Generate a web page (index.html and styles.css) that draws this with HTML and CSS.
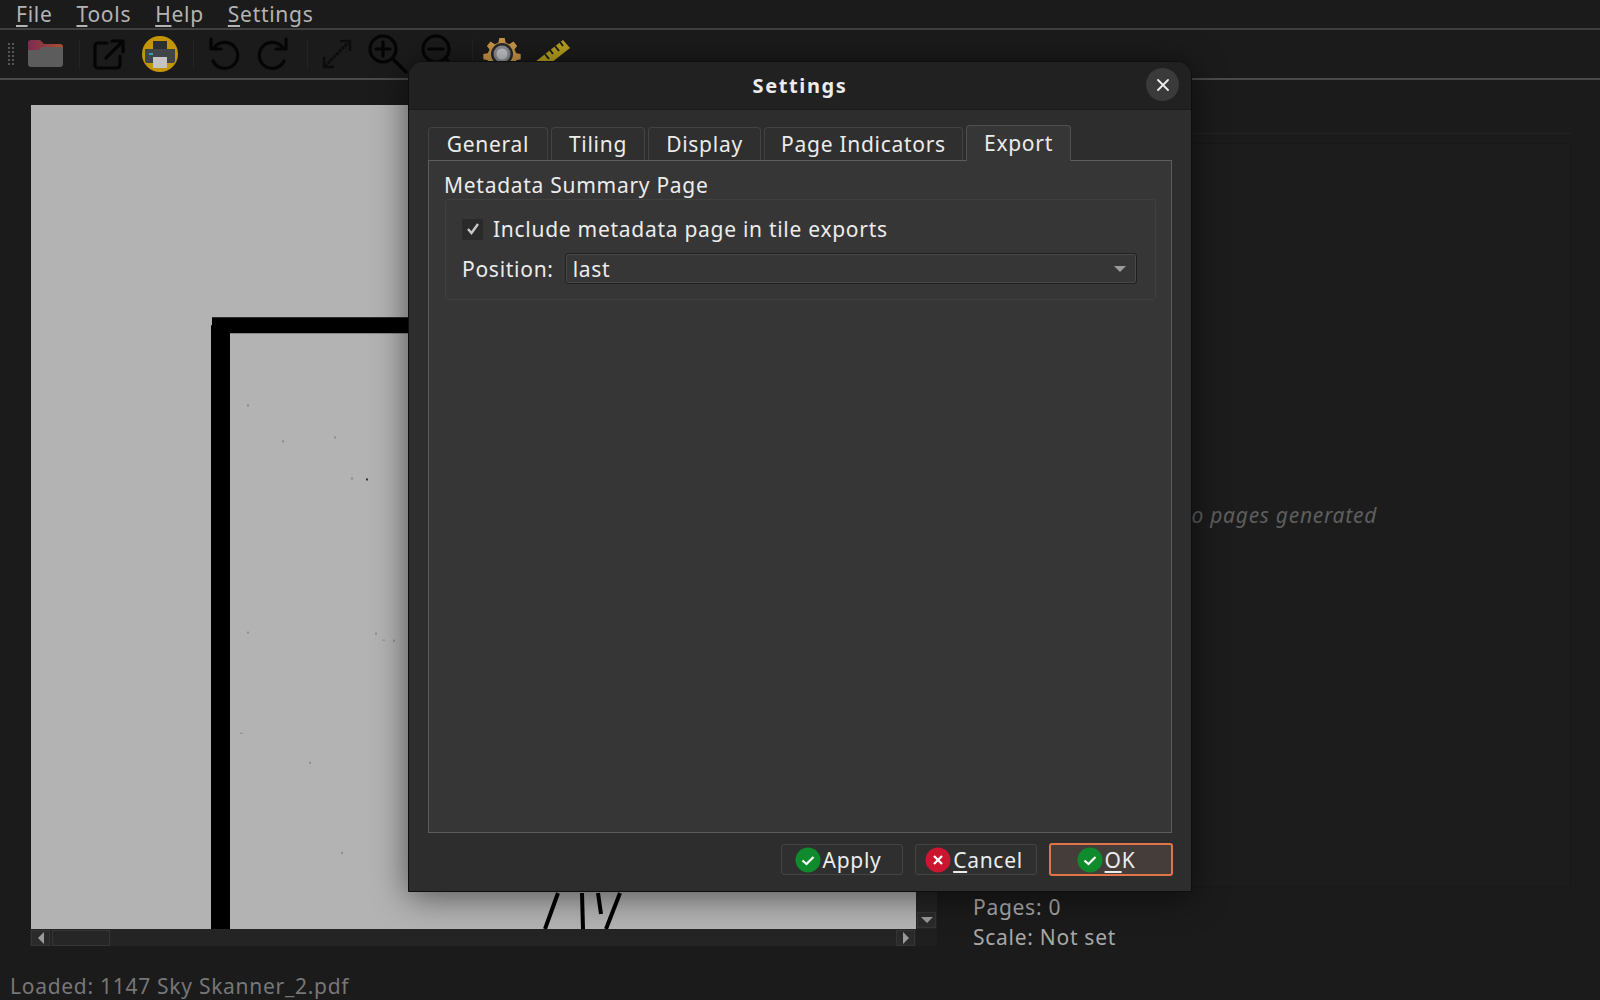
FILE: index.html
```html
<!DOCTYPE html>
<html lang="en">
<head>
<meta charset="utf-8">
<title>Settings</title>
<link rel="stylesheet" href="styles.css">
</head>
<body>
<div class="app">
  <nav class="menubar">
    <span class="menu"><u>F</u>ile</span>
    <span class="menu"><u>T</u>ools</span>
    <span class="menu"><u>H</u>elp</span>
    <span class="menu"><u>S</u>ettings</span>
  </nav>
  <div class="toolbar">
    <svg class="grip" viewBox="0 0 8 22"><g fill="#555"><rect x="0" y="0" width="2" height="2"/><rect x="4" y="0" width="2" height="2"/><rect x="0" y="4" width="2" height="2"/><rect x="4" y="4" width="2" height="2"/><rect x="0" y="8" width="2" height="2"/><rect x="4" y="8" width="2" height="2"/><rect x="0" y="12" width="2" height="2"/><rect x="4" y="12" width="2" height="2"/><rect x="0" y="16" width="2" height="2"/><rect x="4" y="16" width="2" height="2"/><rect x="0" y="20" width="2" height="2"/><rect x="4" y="20" width="2" height="2"/></g></svg>
    <svg class="tool" viewBox="0 0 36 36"><defs><linearGradient id="fold" x1="0" x2="1" y1="0" y2="0"><stop offset="0" stop-color="#7d2a52"/><stop offset="1" stop-color="#a8502c"/></linearGradient></defs><path d="M0 7a3 3 0 0 1 3-3h9l4 4h16a3 3 0 0 1 3 3v8H0z" fill="url(#fold)"/><path d="M0 14h11l3-3h18a3 3 0 0 1 3 3v14a3 3 0 0 1-3 3H3a3 3 0 0 1-3-3z" fill="#5c5c5c"/></svg>
    <span class="sep"></span>
    <svg class="tool" viewBox="0 0 36 36" fill="none" stroke="#050505" stroke-width="3.2" stroke-linecap="round" stroke-linejoin="round"><path d="M16 7H7a3 3 0 0 0-3 3v19a3 3 0 0 0 3 3h19a3 3 0 0 0 3-3v-9"/><path d="M15 22L32 5M21 5h11v11"/></svg>
    <svg class="tool" viewBox="0 0 36 36"><circle cx="18" cy="18" r="18" fill="#c39608"/><path d="M11 5h14v9H11z" fill="#2a3034"/><path d="M3 13h30v12a2 2 0 0 1-2 2H5a2 2 0 0 1-2-2z" fill="#3f4548"/><path d="M11 21h14v11H11z" fill="#c4c4c4"/><path d="M7 17h4v2H7z" fill="#2fa7a0"/></svg>
    <span class="sep"></span>
    <svg class="tool" viewBox="0 0 36 36" fill="none" stroke="#050505" stroke-width="3.2" stroke-linecap="round" stroke-linejoin="round"><path d="M9 12a13 13 0 1 1-1 13"/><path d="M6 3v10h10"/></svg>
    <svg class="tool" viewBox="0 0 36 36" fill="none" stroke="#050505" stroke-width="3.2" stroke-linecap="round" stroke-linejoin="round"><path d="M27 12a13 13 0 1 0 1 13"/><path d="M30 3v10H20"/></svg>
    <span class="sep"></span>
    <svg class="tool" viewBox="0 0 36 36" fill="none" stroke="#0c0c0c" stroke-width="3"><path d="M6 30L30 6" stroke-dasharray="3 1"/><path d="M21 5h10v10M5 21v10h10" stroke-width="2.5"/></svg>
    <svg class="tool" viewBox="0 0 36 36" fill="none" stroke="#050505" stroke-width="3.2" stroke-linecap="round"><circle cx="13" cy="13" r="13"/><path d="M13 6v14M6 13h14M23 23l13 13"/></svg>
    <svg class="tool" viewBox="0 0 36 36" fill="none" stroke="#050505" stroke-width="3.2" stroke-linecap="round"><circle cx="15" cy="13" r="13"/><path d="M8 13h14M25 23l10 10"/></svg>
    <span class="sep"></span>
    <svg class="tool" viewBox="0 0 36 36"><path d="M15 0h6l1 5 4 2 5-3 4 5-3 4 2 4 5 1v6l-5 1-2 4 3 4-4 5-5-3-4 2-1 5h-6l-1-5-4-2-5 3-4-5 3-4-2-4-5-1v-6l5-1 2-4-3-4 4-5 5 3 4-2z" fill="#c8964a" transform="translate(2 2) scale(.89)"/><circle cx="18" cy="18" r="11" fill="#2a2a2a"/><circle cx="18" cy="18" r="8.5" fill="#8b8f96"/><circle cx="18" cy="18" r="5.5" fill="#c2c4c8"/></svg>
    <svg class="tool" viewBox="0 0 36 36"><path d="M0 26L28 4l7 8L7 34z" fill="#b8a01e"/><path d="M10 18l4 5M15 14l3 4M20 10l4 5M25 6l3 4" stroke="#1c1c1c" stroke-width="2"/></svg>
  </div>
  <main class="workspace">
    <section class="viewer">
      <div class="viewer-top">
        <svg class="page" viewBox="0 0 885 823" preserveAspectRatio="none">
          <rect width="885" height="823" fill="#b3b3b3"/>
          <path d="M181 212h704v16H199v595h-19V220h1z" fill="#000"/>
          <path d="M514 823l13-36M551 787l1 36M567 787l3 21M589 787l-14 36" stroke="#000" stroke-width="4" fill="none"/>
          <g fill="#8c8c8c"><rect x="216" y="299" width="2" height="2"/><rect x="251" y="335" width="2" height="2"/><rect x="303" y="331" width="2" height="2"/><rect x="320" y="372" width="2" height="2"/><rect x="335" y="373" width="2" height="2" fill="#333"/><rect x="216" y="526" width="2" height="2"/><rect x="344" y="527" width="2" height="2"/><rect x="351" y="534" width="3" height="1"/><rect x="362" y="534" width="2" height="2"/><rect x="209" y="627" width="3" height="1"/><rect x="278" y="656" width="2" height="2"/><rect x="310" y="746" width="2" height="2"/></g>
        </svg>
        <div class="vscroll"><span class="sbtn"><span class="tri-down"></span></span></div>
      </div>
      <div class="hscroll">
        <span class="sbtn"><span class="tri-left"></span></span>
        <span class="thumb"></span>
        <span class="hfill"></span>
        <span class="sbtn"><span class="tri-right"></span></span>
        <span class="corner"></span>
      </div>
    </section>
    <aside class="side">
      <div class="side-head"></div>
      <div class="preview"><em class="empty">No pages generated</em></div>
      <p class="stat">Pages: 0</p>
      <p class="stat">Scale: Not set</p>
    </aside>
  </main>
  <footer class="status">Loaded: 1147 Sky Skanner_2.pdf</footer>
</div>

<div class="dialog">
  <header class="titlebar">
    <span class="title">Settings</span>
    <button class="close"><svg viewBox="0 0 12 12" fill="none" stroke="#eee" stroke-width="1.8" stroke-linecap="round"><path d="M1 1l10 10M11 1L1 11"/></svg></button>
  </header>
  <div class="body">
    <div class="tabs">
      <span class="tab t-general">General</span>
      <span class="tab t-tiling">Tiling</span>
      <span class="tab t-display">Display</span>
      <span class="tab t-page">Page Indicators</span>
      <span class="tab active">Export</span>
    </div>
    <div class="pane">
      <div class="group-title">Metadata Summary Page</div>
      <div class="group">
        <label class="check-row"><span class="checkbox"><svg viewBox="0 0 14 12" fill="none" stroke="#c8c8c8" stroke-width="2.4"><path d="M2 6l3.5 4L12 1"/></svg></span>Include metadata page in tile exports</label>
        <div class="pos-row"><span>Position:</span><span class="combo"><span>last</span><span class="tri-down combo-arrow"></span></span></div>
      </div>
    </div>
    <div class="buttons">
      <button class="btn b-apply"><svg class="bi" viewBox="0 0 26 26"><circle cx="13" cy="13" r="12.5" fill="#0f8a2c"/><path d="M7.5 13.5l4 3.5 7-7" fill="none" stroke="#fff" stroke-width="2.2"/></svg>Apply</button>
      <button class="btn b-cancel"><svg class="bi" viewBox="0 0 26 26"><circle cx="13" cy="13" r="12.5" fill="#cc1530"/><path d="M9 9l8 8M17 9l-8 8" fill="none" stroke="#fff" stroke-width="2.2"/></svg><span><u>C</u>ancel</span></button>
      <button class="btn b-ok"><svg class="bi" viewBox="0 0 26 26"><circle cx="13" cy="13" r="12.5" fill="#0f8a2c"/><path d="M7.5 13.5l4 3.5 7-7" fill="none" stroke="#fff" stroke-width="2.2"/></svg><span><u>O</u>K</span></button>
    </div>
  </div>
</div>
</body>
</html>
```
FILE: styles.css
```css
* { box-sizing: border-box; }
html, body { margin: 0; height: 100%; }
body {
  background: #1b1b1b;
  color: #bcbcbc;
  font-family: "Noto Sans", "Open Sans", sans-serif;
  font-size: 21px;
  letter-spacing: .72px;
  overflow: hidden;
  position: relative;
}
u { text-underline-offset: 3px; text-decoration-thickness: 2px; }
.app { display: flex; flex-direction: column; width: 1600px; height: 1000px; }

.menubar { display: flex; padding-left: 16px; gap: 24px; align-items: center; border-bottom: 2px solid #3f3f3f; height: 30px; line-height: 28px; }
.menu { color: #b4b4b4; }

.toolbar { display: flex; align-items: center; height: 50px; padding-left: 8px; border-bottom: 2px solid #4a4a4a; }
.grip { width: 8px; height: 22px; margin-right: 12px; flex: none; }
.tool { width: 36px; height: 36px; margin-right: 15px; flex: none; overflow: visible; }
.sep { width: 1px; height: 30px; background: #242424; margin-right: 11px; flex: none; }

.workspace { flex: 1; display: flex; padding: 25px 29px 0 30px; min-height: 0; }
.viewer { width: 907px; height: 841px; display: flex; flex-direction: column; flex: none; }
.viewer-top { display: flex; height: 824px; }
.page { display: block; width: 885px; height: 824px; flex: none; margin-left: 1px; }
.vscroll { flex: 1; background: #242424; display: flex; flex-direction: column; justify-content: flex-end; align-items: center; padding-bottom: 1px; }
.hscroll { display: flex; align-items: center; height: 17px; background: #242424; padding-left: 1px; }
.sbtn { width: 19px; height: 16px; background: #2a2a2a; border: 1px solid #353535; display: flex; align-items: center; justify-content: center; flex: none; }
.thumb { width: 58px; height: 16px; margin-left: 2px; background: #262626; border: 1px solid #363636; flex: none; }
.hfill { flex: 1; }
.corner { width: 21px; height: 17px; margin-left: 1px; background: #1f1f1f; flex: none; }
.tri-down { width: 0; height: 0; border: 6px solid transparent; border-top: 6px solid #9a9a9a; border-bottom: 0; }
.tri-left { width: 0; height: 0; border: 6px solid transparent; border-right: 6px solid #9a9a9a; border-left: 0; }
.tri-right { width: 0; height: 0; border: 6px solid transparent; border-left: 6px solid #9a9a9a; border-right: 0; }

.side { flex: 1; margin-left: 33px; display: flex; flex-direction: column; min-width: 0; }
.side-head { height: 29px; border-bottom: 1px solid #232323; margin-bottom: 9px; flex: none; }
.preview { height: 744px; border: 1px solid #181818; background: #1c1c1c; display: flex; align-items: center; justify-content: center; padding-left: 12px; flex: none; }
.empty { color: #5e5e5e; }
.stat { margin: 0 0 0 3px; height: 30px; line-height: 30px; color: #a8a8a8; }
.preview + .stat { margin-top: 5px; }

.status { height: 29px; line-height: 28px; padding: 1px 0 0 10px; color: #777; flex: none; }

.dialog {
  position: absolute;
  left: 408px;
  top: 61px;
  width: 784px;
  height: 831px;
  display: flex;
  flex-direction: column;
  border: 1px solid #0e0e0e;
  border-radius: 15px 15px 0 0;
  background: #2d2d2d;
  box-shadow: 0 4px 34px rgba(0,0,0,.55);
  color: #ececec;
}
.titlebar { height: 48px; flex: none; background: #212121; border-radius: 14px 14px 0 0; border-bottom: 1px solid #1a1a1a; display: flex; align-items: center; justify-content: center; position: relative; }
.title { font-weight: 700; font-size: 20px; letter-spacing: 1.6px; }
.close { position: absolute; right: 12px; top: 6px; width: 33px; height: 33px; border: 0; border-radius: 50%; background: #3a3a3a; display: flex; align-items: center; justify-content: center; padding: 0; }
.close svg { width: 12px; height: 12px; }

.body { flex: 1; display: flex; flex-direction: column; padding: 15px 19px 15px 19px; min-height: 0; }
.tabs { display: flex; align-items: flex-end; gap: 3px; height: 35px; flex: none; position: relative; z-index: 1; }
.tab { height: 33px; display: flex; align-items: center; justify-content: center; background: #2f2f2f; border: 1px solid #434343; border-bottom: 0; border-radius: 4px 4px 0 0; }
.t-general { width: 120px; }
.t-tiling { width: 94px; }
.t-display { width: 113px; }
.t-page { width: 199px; }
.tab.active { width: 105px; height: 36px; background: #363636; border-color: #505050; margin-bottom: -1px; padding-bottom: 2px; }

.pane { flex: 1; background: #363636; border: 1px solid #5d5d5d; min-height: 0; padding: 11px 15px; }
.group-title { height: 27px; line-height: 27px; }
.group { margin-left: 1px; height: 101px; border: 1px solid #404040; border-radius: 3px; padding: 14px 18px 14px 16px; }
.check-row { display: flex; align-items: center; gap: 10px; height: 30px; }
.checkbox { width: 21px; height: 21px; background: #2a2a2a; border-radius: 2px; display: flex; align-items: center; justify-content: center; flex: none; }
.checkbox svg { width: 14px; height: 12px; }
.pos-row { display: flex; align-items: center; gap: 11px; margin-top: 9px; }
.combo { flex: 1; height: 31px; display: flex; align-items: center; justify-content: space-between; padding: 0 10px 0 7px; background: #363636; border: 1px solid #202020; border-radius: 3px; box-shadow: inset 0 0 0 1px #484848; }

.buttons { display: flex; justify-content: flex-end; gap: 12px; padding-top: 11px; margin-right: -1px; flex: none; }
.btn { height: 31px; width: 122px; display: flex; align-items: center; justify-content: center; padding: 0; gap: 2px; background: #2f2f2f; color: #ececec; font: inherit; letter-spacing: inherit; border: 1px solid #444; border-radius: 3px; }
.bi { width: 26px; height: 26px; flex: none; }
.b-apply { padding-right: 8px; }
.b-cancel { padding-right: 4px; }
.b-ok { background: #453d3a; border: 2px solid #e0744a; height: 33px; margin-top: -1px; width: 124px; padding-right: 10px; }
```
